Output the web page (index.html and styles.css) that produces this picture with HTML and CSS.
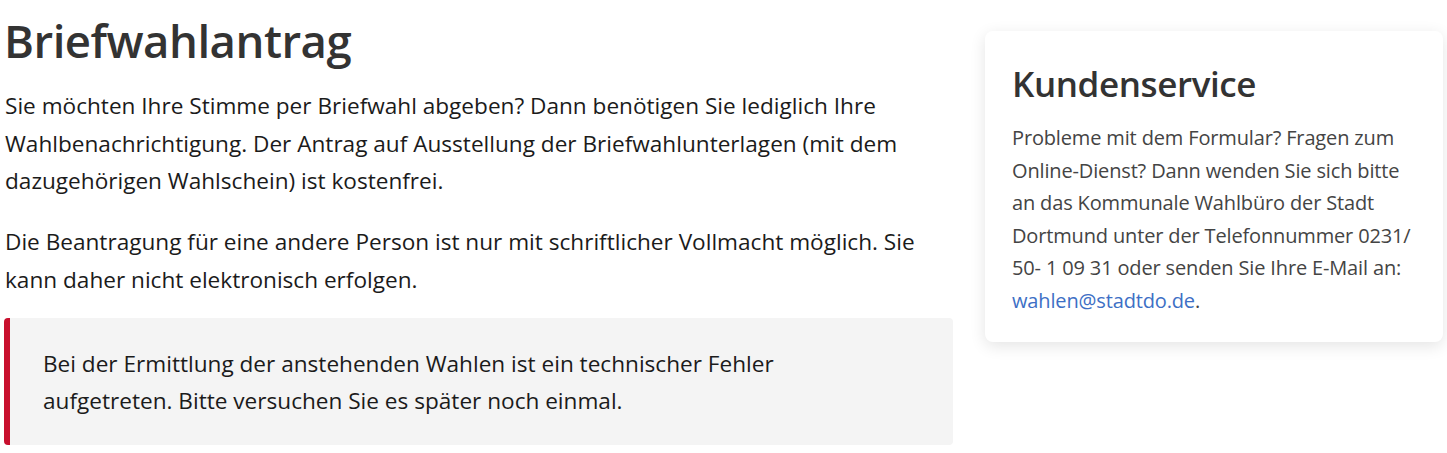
FILE: index.html
```html
<!DOCTYPE html>
<html lang="de">
<head>
    <meta charset="UTF-8">
    <meta name="viewport" content="width=device-width, initial-scale=1.0">
    <title>Briefwahlantrag</title>
    <link rel="stylesheet" href="styles.css">
</head>
<body>

  <div class="page">

    <!-- Hauptbereich -->
    <main class="main-col">
      <h1>Briefwahlantrag</h1>

      <p>Sie möchten Ihre Stimme per Briefwahl abgeben? Dann benötigen Sie lediglich Ihre Wahlbenachrichtigung. Der Antrag auf Ausstellung der Briefwahlunterlagen (mit dem dazugehörigen Wahlschein) ist kostenfrei.</p>

      <p>Die Beantragung für eine andere Person ist nur mit schriftlicher Vollmacht möglich. Sie kann daher nicht elektronisch erfolgen.</p>

      <div class="alert-error">
        <p>Bei der Ermittlung der anstehenden Wahlen ist ein technischer Fehler aufgetreten. Bitte versuchen Sie es später noch einmal.</p>
      </div>
    </main>

    <!-- Kundenservice -->
    <aside class="side-col">
      <div class="service-card">
        <h2>Kundenservice</h2>
        <p>Probleme mit dem Formular? Fragen zum Online-Dienst? Dann wenden Sie sich bitte an das Kommunale Wahlbüro der Stadt Dortmund unter der Telefonnummer 0231/ 50- 1 09 31 oder senden Sie Ihre E-Mail an: <a href="mailto:wahlen@stadtdo.de">wahlen@stadtdo.de</a>.</p>
      </div>
    </aside>

  </div>

</body>
</html>
```

FILE: styles.css
```css
/* Grundlayout */
body {
    margin: 0;
    font-family: 'Open Sans', 'Noto Sans', sans-serif;
    color: #1b1b1b;
    background: #fff;
}

.page {
    display: flex;
    gap: 32px;
    padding: 0 4px;
}

/* linke Spalte */
.main-col {
    flex: 0 0 949px;
}

h1 {
    font-size: 45.5px;
    font-weight: 600;
    color: #333;
    margin: 8px 0 15px 0;
    line-height: 64px;
    letter-spacing: -0.5px;
}

.main-col p {
    font-size: 22.6px;
    line-height: 37.7px;
    margin: 0 0 23px 1px;
}

/* Fehlermeldung */
.alert-error {
    background: #f4f4f4;
    border-left: 6px solid #c8102e;
    border-radius: 4px;
    margin-top: -4px;
    padding: 27px 32px 25px 33px;
}

.alert-error p {
    margin: 0;
    max-width: 790px;
}

/* rechte Spalte */
.side-col {
    flex: 1;
    padding-top: 31px;
}

.service-card {
    background: #fff;
    border-radius: 8px;
    box-shadow: 0 4px 16px rgba(0, 0, 0, 0.11);
    padding: 26px 20px 24px 27px;
}

.service-card h2 {
    font-size: 35px;
    font-weight: 600;
    color: #333;
    margin: 0 0 11px 0;
    line-height: 54px;
    letter-spacing: -0.4px;
}

.service-card p {
    font-size: 20px;
    line-height: 32.6px;
    letter-spacing: -0.15px;
    color: #444;
    margin: 0;
}

.service-card a {
    color: #3d6fc5;
    text-decoration: none;
}
```
